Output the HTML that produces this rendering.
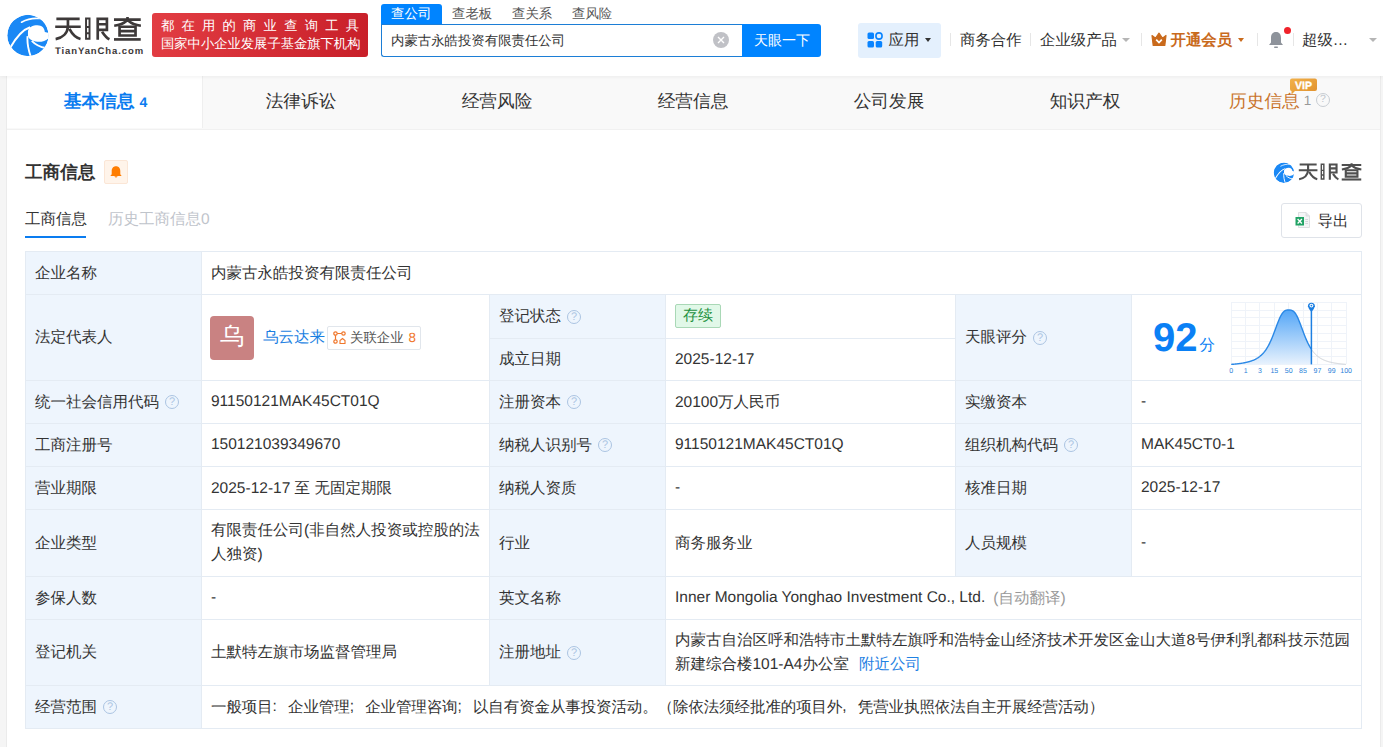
<!DOCTYPE html>
<html><head><meta charset="utf-8">
<style>
*{box-sizing:border-box;margin:0;padding:0}
html,body{width:1383px;height:747px;overflow:hidden}
body{position:relative;text-rendering:geometricPrecision;background:#f5f5f5;font-family:"Liberation Sans",sans-serif;color:#333;font-size:15px}
.a{position:absolute;white-space:nowrap}
#hdr{position:absolute;left:0;top:0;width:1383px;height:76px;background:#fff;z-index:3;box-shadow:0 1px 4px rgba(0,0,0,.06)}
#card{position:absolute;left:7px;top:76px;width:1373px;height:700px;background:#fff;box-shadow:-1px 0 0 #ebebeb,1px 0 0 #ebebeb}
#tabs{position:absolute;left:7px;top:76px;width:1373px;height:54px;background:#f9f9f9;border-bottom:1px solid #f1f1f1}
.tab{position:absolute;top:0;height:52px;width:196px;text-align:center;font-size:17.7px;line-height:50px;color:#333}
.cell{position:absolute;border-right:1px solid #e4ebf3;border-bottom:1px solid #e4ebf3;display:flex;align-items:center;padding-left:9px;font-size:15.5px;color:#333}
.lb{background:#eef5fd}
.q{display:inline-block;width:14px;height:14px;border:1px solid #abc4e2;border-radius:50%;font-size:11px;line-height:12px;text-align:center;color:#abc4e2;margin-left:6px}
</style></head>
<body>
<div id="hdr">
  <!-- logo -->
  <svg class="a" style="left:4px;top:10px" width="50" height="50" viewBox="0 0 747 747">
    <defs><clipPath id="cc"><circle cx="357" cy="380" r="308"/></clipPath></defs>
    <g clip-path="url(#cc)">
    <circle cx="357" cy="380" r="308" fill="#1a88f5"/>
    <path fill="#fff" d="M358,320 C365,255 430,228 500,228 C565,230 605,265 610,328 L700,350 L700,390 C640,455 580,478 500,474 C425,468 365,435 358,390 Z"/>
    <path stroke="#fff" stroke-width="30" fill="none" d="M95,560 C170,430 260,300 390,258"/>
    <path stroke="#fff" stroke-width="28" fill="none" d="M352,390 C342,500 365,600 405,710"/>
    <path stroke="#fff" stroke-width="28" fill="none" d="M415,462 C475,525 540,555 625,568"/>
    <path stroke="#fff" stroke-width="24" fill="none" stroke-linecap="round" d="M262,183 C340,140 440,118 530,128"/>
    </g>
  </svg>
  <svg class="a" style="left:50px;top:10px" width="100" height="36" viewBox="0 0 1383 498">
    <g fill="none" stroke="#3d3939" stroke-width="37">
      <path d="M88,122 H410 M72,232 H425"/>
      <path d="M248,122 V232 C240,320 175,385 78,402"/>
      <path d="M268,262 C310,340 355,385 422,402"/>
      <path stroke-width="27" d="M498.5,118.5 H546.5 V396.5 H498.5 Z M498.5,235 H546.5 M498.5,322 H546.5"/>
      <path d="M660,105 V410 M660,122 H787 V275 H660 M660,197 H787"/>
      <path d="M720,300 C760,360 790,390 822,405"/>
      <path d="M885,132 H1255 M1072,98 V132"/>
      <path d="M1065,145 C1010,195 950,210 888,218 M1080,145 C1135,195 1195,210 1257,218"/>
      <path d="M962,232 H1183 V353 H962 Z M962,292 H1183"/>
      <path d="M885,407 H1255"/>
    </g>
  </svg>
  <div class="a" style="left:55px;top:45.5px;font-size:9.5px;line-height:12px;font-weight:bold;color:#3d3939;letter-spacing:0.9px">TianYanCha.com</div>
  <!-- red banner -->
  <div class="a" style="left:152px;top:13px;width:216px;height:44px;border-radius:3px;background:linear-gradient(100deg,#e23d43,#c81f29)"></div>
  <div class="a" style="left:161px;top:15.5px;width:198px;font-size:13.3px;line-height:19px;color:#fff;text-align:justify;text-align-last:justify">都 在 用 的 商 业 查 询 工 具</div>
  <div class="a" style="left:161px;top:34px;width:200px;font-size:13.3px;line-height:19px;color:#fff">国家中小企业发展子基金旗下机构</div>
  <!-- search tabs -->
  <div class="a" style="left:381px;top:4px;width:61px;height:21px;background:#0084ff;border-radius:3px 3px 0 0"></div>
  <div class="a" style="left:391px;top:4px;font-size:13.5px;line-height:20px;color:#fff">查公司</div>
  <div class="a" style="left:452px;top:4px;font-size:13.4px;line-height:20px;color:#555">查老板</div>
  <div class="a" style="left:512px;top:4px;font-size:13.4px;line-height:20px;color:#555">查关系</div>
  <div class="a" style="left:572px;top:4px;font-size:13.4px;line-height:20px;color:#555">查风险</div>
  <div class="a" style="left:381px;top:24px;width:362px;height:33px;border:1px solid #1c7ed6;border-right:none;border-radius:0 0 0 3px;background:#fff"></div>
  <div class="a" style="left:391px;top:31px;font-size:13.4px;line-height:19px;color:#333">内蒙古永皓投资有限责任公司</div>
  <div class="a" style="left:713px;top:32px;width:16px;height:16px;border-radius:50%;background:#c0c1c6"></div>
  <svg class="a" style="left:713px;top:32px" width="16" height="16" viewBox="0 0 16 16"><path d="M5 5L11 11M11 5L5 11" stroke="#fff" stroke-width="1.4"/></svg>
  <div class="a" style="left:742px;top:24px;width:79px;height:33px;background:#0084ff;border-radius:0 3px 3px 0"></div>
  <div class="a" style="left:754px;top:30px;font-size:14px;line-height:20px;color:#fff">天眼一下</div>
  <!-- right nav -->
  <div class="a" style="left:858px;top:23px;width:83px;height:35px;background:#e4f0fd;border-radius:3px"></div>
  <svg class="a" style="left:867px;top:32px" width="16" height="16" viewBox="0 0 16 16">
    <rect x="0.5" y="0.5" width="6.5" height="6.5" rx="1.5" fill="#0a84ff"/>
    <circle cx="12" cy="4" r="3.1" fill="none" stroke="#0a84ff" stroke-width="1.6"/>
    <rect x="0.5" y="9" width="6.5" height="6.5" rx="1.5" fill="#0a84ff"/>
    <rect x="8.7" y="9" width="6.5" height="6.5" rx="1.5" fill="#0a84ff"/>
  </svg>
  <div class="a" style="left:888.5px;top:30.5px;font-size:15.4px;line-height:20px;color:#333">应用</div>
  <div class="a" style="left:925px;top:38px;width:0;height:0;border-left:3.5px solid transparent;border-right:3.5px solid transparent;border-top:4px solid #333"></div>
  <div class="a" style="left:950px;top:33px;width:1px;height:13px;background:#e6e6e6"></div>
  <div class="a" style="left:960px;top:30.5px;font-size:15.4px;line-height:20px;color:#333">商务合作</div>
  <div class="a" style="left:1030px;top:33px;width:1px;height:13px;background:#e6e6e6"></div>
  <div class="a" style="left:1040px;top:30.5px;font-size:15.4px;line-height:20px;color:#333">企业级产品</div>
  <div class="a" style="left:1122px;top:38px;width:0;height:0;border-left:4px solid transparent;border-right:4px solid transparent;border-top:4px solid #b5b5b5"></div>
  <div class="a" style="left:1141px;top:33px;width:1px;height:13px;background:#e6e6e6"></div>
  <svg class="a" style="left:1151px;top:32px" width="16" height="14" viewBox="0 0 16 14">
    <path d="M1 3.5 L4.6 6.2 L8 1.2 L11.4 6.2 L15 3.5 L13.8 13.5 L2.2 13.5 Z" fill="#c96a1c" stroke="#c96a1c" stroke-width="1.2" stroke-linejoin="round"/>
    <path d="M5.2 7.6 L8 10.6 L10.8 7.6" stroke="#fff" stroke-width="1.7" fill="none"/>
  </svg>
  <div class="a" style="left:1170.5px;top:30.5px;font-size:15.4px;line-height:20px;color:#c96a1c;font-weight:bold">开通会员</div>
  <div class="a" style="left:1238px;top:38px;width:0;height:0;border-left:3.5px solid transparent;border-right:3.5px solid transparent;border-top:4px solid #c96a1c"></div>
  <div class="a" style="left:1257px;top:33px;width:1px;height:13px;background:#e6e6e6"></div>
  <svg class="a" style="left:1268px;top:31px" width="16" height="18" viewBox="0 0 16 18">
    <path d="M8 1 C4.5 1 3 3.5 3 7 L3 11.5 L1 14 L15 14 L13 11.5 L13 7 C13 3.5 11.5 1 8 1Z" fill="#8e939b"/>
    <rect x="6" y="15.5" width="4" height="1.6" rx="0.8" fill="#8e939b"/>
  </svg>
  <div class="a" style="left:1284px;top:27px;width:7px;height:7px;border-radius:50%;background:#f0222a"></div>
  <div class="a" style="left:1293px;top:33px;width:1px;height:13px;background:#e6e6e6"></div>
  <div class="a" style="left:1302px;top:30.5px;font-size:15.4px;line-height:20px;color:#333">超级…</div>
  <div class="a" style="left:1369px;top:38px;width:0;height:0;border-left:4px solid transparent;border-right:4px solid transparent;border-top:4px solid #b5b5b5"></div>
</div>

<div id="card"></div>
<div id="tabs">
  <div class="tab" style="left:0;padding-left:2px;background:#fff;border-right:1px solid #efefef;color:#0a7cf0;font-weight:bold">基本信息 <span style="font-size:14px;font-weight:bold">4</span></div>
  <div class="tab" style="left:196px">法律诉讼</div>
  <div class="tab" style="left:392px">经营风险</div>
  <div class="tab" style="left:588px">经营信息</div>
  <div class="tab" style="left:784px">公司发展</div>
  <div class="tab" style="left:980px">知识产权</div>
  <div class="tab" style="left:1176px;color:#c9742c;text-align:left;padding-left:46px">历史信息<span style="font-size:13.5px;color:#999;margin-left:4px;position:relative;top:-2px">1</span></div>
  <div class="a" style="left:1309px;top:17px;width:14px;height:14px;border:1.3px solid #c8cdd3;border-radius:50%;font-size:10.5px;line-height:11.5px;text-align:center;color:#bfc5cc">?</div>
  <svg class="a" style="left:1282px;top:2px" width="29" height="18" viewBox="0 0 29 18">
    <defs><linearGradient id="vg" x1="0" y1="0" x2="1" y2="1"><stop offset="0" stop-color="#f2b14a"/><stop offset="1" stop-color="#e0902c"/></linearGradient></defs>
    <path d="M3,0.5 H26 Q28,0.5 28,2.5 V11 Q28,13 26,13 H6 L2.5,16.5 L2.5,13 Q1,13 1,11 V2.5 Q1,0.5 3,0.5Z" fill="url(#vg)"/>
    <text x="14.5" y="10.8" font-size="10.5" font-weight="bold" fill="#fff" stroke="#fff" stroke-width="0.35" text-anchor="middle" font-family="Liberation Sans, sans-serif">VIP</text>
  </svg>
</div>

<div id="content">
  <div class="a" style="left:25px;top:160px;font-size:17.6px;line-height:24px;font-weight:bold;color:#333">工商信息</div>
  <div class="a" style="left:104px;top:160px;width:24px;height:24px;background:#fff4ea;border:1px solid #fbe6d6;border-radius:2px"></div>
  <svg class="a" style="left:109px;top:165px" width="14" height="14" viewBox="0 0 14 14">
    <path d="M7 1.2 C4 1.2 2.7 3.5 2.7 6.2 L2.7 9.3 L1.3 10.9 L12.7 10.9 L11.3 9.3 L11.3 6.2 C11.3 3.5 10 1.2 7 1.2Z" fill="#ff7d00"/>
    <path d="M5.3 11.2 Q7 13.8 8.7 11.2Z" fill="#ff7d00"/>
  </svg>
  <!-- small logo -->
  <svg class="a" style="left:1272px;top:160px" width="25" height="25" viewBox="0 0 747 747">
    <g clip-path="url(#cc)">
    <circle cx="357" cy="380" r="308" fill="#1a88f5"/>
    <path fill="#fff" d="M358,320 C365,255 430,228 500,228 C565,230 605,265 610,328 L700,350 L700,390 C640,455 580,478 500,474 C425,468 365,435 358,390 Z"/>
    <path stroke="#fff" stroke-width="30" fill="none" d="M95,560 C170,430 260,300 390,258"/>
    <path stroke="#fff" stroke-width="28" fill="none" d="M352,390 C342,500 365,600 405,710"/>
    <path stroke="#fff" stroke-width="28" fill="none" d="M415,462 C475,525 540,555 625,568"/>
    <path stroke="#fff" stroke-width="24" fill="none" stroke-linecap="round" d="M262,183 C340,140 440,118 530,128"/>
    </g>
  </svg>
  <svg class="a" style="left:1295.2px;top:158px" width="73" height="26.3" viewBox="0 0 1383 498">
    <g fill="none" stroke="#4f4f4f" stroke-width="40">
      <path d="M88,122 H410 M72,232 H425"/>
      <path d="M248,122 V232 C240,320 175,385 78,402"/>
      <path d="M268,262 C310,340 355,385 422,402"/>
      <path stroke-width="27" d="M498.5,118.5 H546.5 V396.5 H498.5 Z M498.5,235 H546.5 M498.5,322 H546.5"/>
      <path d="M660,105 V410 M660,122 H787 V275 H660 M660,197 H787"/>
      <path d="M720,300 C760,360 790,390 822,405"/>
      <path d="M885,132 H1255 M1072,98 V132"/>
      <path d="M1065,145 C1010,195 950,210 888,218 M1080,145 C1135,195 1195,210 1257,218"/>
      <path d="M962,232 H1183 V353 H962 Z M962,292 H1183"/>
      <path d="M885,407 H1255"/>
    </g>
  </svg>
  <!-- sub tabs -->
  <div class="a" style="left:25px;top:210px;font-size:15.5px;line-height:20px;color:#333">工商信息</div>
  <div class="a" style="left:25px;top:236px;width:61px;height:2px;background:#0a7cf0"></div>
  <div class="a" style="left:108px;top:210px;font-size:15.5px;line-height:20px;color:#bfc4cb">历史工商信息0</div>
  <!-- export -->
  <div class="a" style="left:1281px;top:203px;width:81px;height:35px;border:1px solid #dfe3e9;border-radius:3px;background:#fff"></div>
  <svg class="a" style="left:1295px;top:212px" width="16" height="16" viewBox="0 0 16 16">
    <path d="M3.5 0.5 L11 0.5 L14.5 4 L14.5 15.5 L3.5 15.5 Z" fill="#f4f5f6" stroke="#d6d8db" stroke-width="0.8"/>
    <path d="M11 0.5 L11 4 L14.5 4" fill="#e4e6e9" stroke="#d6d8db" stroke-width="0.8"/>
    <rect x="0.5" y="5" width="8.5" height="8.5" fill="#21a365"/>
    <path d="M2.6 7 L6.9 11.5 M6.9 7 L2.6 11.5" stroke="#fff" stroke-width="1.3"/>
    <path d="M10.3 7.5 H13 M10.3 9.5 H13 M10.3 11.5 H13" stroke="#cfd3d7" stroke-width="0.9"/>
  </svg>
  <div class="a" style="left:1317.5px;top:211.5px;font-size:15.5px;line-height:20px;color:#333">导出</div>

  <!-- table -->
  <div class="a" style="left:25px;top:251px;width:1337px;height:478px;border-left:1px solid #e4ebf3;border-top:1px solid #e4ebf3"></div>
<div class="cell lb" style="left:26px;top:252px;width:176px;height:43px;">企业名称</div>
<div class="cell" style="left:202px;top:252px;width:1160px;height:43px;">内蒙古永皓投资有限责任公司</div>
<div class="cell lb" style="left:26px;top:295px;width:176px;height:86px;">法定代表人</div>
<div class="cell" style="left:202px;top:295px;width:288px;height:86px;"><div style="width:44px;height:44px;border-radius:4px;background:#c98282;color:#fff;font-size:24px;line-height:42px;text-align:center;margin-left:-1px">乌</div>
<span style="color:#1a7fe2;margin-left:9px">乌云达来</span>
<span style="display:inline-flex;align-items:center;height:24px;border:1px solid #e1e6ec;border-radius:2px;padding:0 4px 0 5px;margin-left:2px;font-size:13.4px;color:#555">
<svg width="13" height="13" viewBox="0 0 13 13" style="margin-right:4px"><circle cx="2.5" cy="2.5" r="1.7" fill="none" stroke="#f0772c" stroke-width="1.2"/><circle cx="10.5" cy="2.5" r="1.7" fill="none" stroke="#f0772c" stroke-width="1.2"/><circle cx="2.5" cy="10.5" r="1.7" fill="none" stroke="#f0772c" stroke-width="1.2"/><path d="M4.2 2.5H8.8M2.5 4.2V8.8" stroke="#f0772c" stroke-width="1.2"/><path d="M7 12.5V9.5L9.5 7.5L12 9.5V12.5Z" fill="none" stroke="#f0772c" stroke-width="1.1"/></svg>关联企业<span style="color:#f0772c;margin-left:5px">8</span></span></div>
<div class="cell lb" style="left:490px;top:295px;width:176px;height:44px;">登记状态<span class="q">?</span></div>
<div class="cell" style="left:666px;top:295px;width:290px;height:44px;"><span style="display:inline-block;height:24px;line-height:22px;padding:0 7px;border:1px solid #a9d8b6;background:#e1f8e8;color:#1e9140;border-radius:2px;font-size:15px;position:relative;top:-1px">存续</span></div>
<div class="cell lb" style="left:490px;top:339px;width:176px;height:42px;">成立日期</div>
<div class="cell" style="left:666px;top:339px;width:290px;height:42px;">2025-12-17</div>
<div class="cell lb" style="left:956px;top:295px;width:176px;height:86px;">天眼评分<span class="q">?</span></div>
<div class="cell" style="left:1132px;top:295px;width:230px;height:86px;"></div>
<svg class="a" style="left:1131px;top:294px" width="230" height="86" viewBox="1131 294 230 86">
<defs><linearGradient id="bg1" x1="0" y1="0" x2="0" y2="1"><stop offset="0" stop-color="#54a6f7"/><stop offset="1" stop-color="#e8f2fd"/></linearGradient></defs>
<g stroke="#eff3f9" stroke-width="1" shape-rendering="crispEdges"><line x1="1231.2" y1="302.4" x2="1231.2" y2="364.4"/><line x1="1245.6" y1="302.4" x2="1245.6" y2="364.4"/><line x1="1259.9" y1="302.4" x2="1259.9" y2="364.4"/><line x1="1274.3" y1="302.4" x2="1274.3" y2="364.4"/><line x1="1288.7" y1="302.4" x2="1288.7" y2="364.4"/><line x1="1303.0" y1="302.4" x2="1303.0" y2="364.4"/><line x1="1317.4" y1="302.4" x2="1317.4" y2="364.4"/><line x1="1331.7" y1="302.4" x2="1331.7" y2="364.4"/><line x1="1346.1" y1="302.4" x2="1346.1" y2="364.4"/><line x1="1231.2" y1="302.4" x2="1346.1" y2="302.4"/><line x1="1231.2" y1="310.1" x2="1346.1" y2="310.1"/><line x1="1231.2" y1="317.9" x2="1346.1" y2="317.9"/><line x1="1231.2" y1="325.6" x2="1346.1" y2="325.6"/><line x1="1231.2" y1="333.4" x2="1346.1" y2="333.4"/><line x1="1231.2" y1="341.1" x2="1346.1" y2="341.1"/><line x1="1231.2" y1="348.9" x2="1346.1" y2="348.9"/><line x1="1231.2" y1="356.6" x2="1346.1" y2="356.6"/><line x1="1231.2" y1="364.4" x2="1346.1" y2="364.4"/></g>
<path d="M1231.2,364.4 L1231.2,364.40 L1231.7,364.36 L1232.2,364.32 L1232.7,364.28 L1233.2,364.24 L1233.7,364.20 L1234.2,364.15 L1234.7,364.11 L1235.2,364.06 L1235.7,364.01 L1236.2,363.96 L1236.7,363.90 L1237.2,363.85 L1237.7,363.79 L1238.2,363.73 L1238.7,363.67 L1239.2,363.61 L1239.7,363.54 L1240.2,363.47 L1240.7,363.40 L1241.2,363.32 L1241.7,363.25 L1242.2,363.17 L1242.7,363.08 L1243.2,363.00 L1243.7,362.91 L1244.2,362.81 L1244.7,362.72 L1245.2,362.62 L1245.7,362.51 L1246.2,362.40 L1246.7,362.28 L1247.2,362.16 L1247.7,362.04 L1248.2,361.91 L1248.7,361.77 L1249.2,361.63 L1249.7,361.48 L1250.2,361.33 L1250.7,361.17 L1251.2,361.00 L1251.7,360.82 L1252.2,360.63 L1252.7,360.44 L1253.2,360.24 L1253.7,360.02 L1254.2,359.80 L1254.7,359.56 L1255.2,359.32 L1255.7,359.06 L1256.2,358.79 L1256.7,358.51 L1257.2,358.21 L1257.7,357.90 L1258.2,357.57 L1258.7,357.22 L1259.2,356.86 L1259.7,356.48 L1260.2,356.08 L1260.7,355.66 L1261.2,355.21 L1261.7,354.74 L1262.2,354.25 L1262.7,353.74 L1263.2,353.19 L1263.7,352.62 L1264.2,352.02 L1264.7,351.39 L1265.2,350.73 L1265.7,350.03 L1266.2,349.30 L1266.7,348.53 L1267.2,347.73 L1267.7,346.88 L1268.2,346.00 L1268.7,345.08 L1269.2,344.11 L1269.7,343.11 L1270.2,342.06 L1270.7,340.97 L1271.2,339.85 L1271.7,338.68 L1272.2,337.48 L1272.7,336.24 L1273.2,334.97 L1273.7,333.67 L1274.2,332.35 L1274.7,331.01 L1275.2,329.65 L1275.7,328.29 L1276.2,326.93 L1276.7,325.58 L1277.2,324.24 L1277.7,322.93 L1278.2,321.65 L1278.7,320.41 L1279.2,319.22 L1279.7,318.08 L1280.2,317.02 L1280.7,316.02 L1281.2,315.09 L1281.7,314.25 L1282.2,313.49 L1282.7,312.81 L1283.2,312.22 L1283.7,311.71 L1284.2,311.28 L1284.7,310.92 L1285.2,310.63 L1285.7,310.41 L1286.2,310.25 L1286.7,310.13 L1287.2,310.06 L1287.7,310.02 L1288.2,310.00 L1288.7,310.00 L1289.2,310.00 L1289.7,310.01 L1290.2,310.04 L1290.7,310.10 L1291.2,310.20 L1291.7,310.34 L1292.2,310.54 L1292.7,310.80 L1293.2,311.13 L1293.7,311.53 L1294.2,312.01 L1294.7,312.57 L1295.2,313.21 L1295.7,313.94 L1296.2,314.75 L1296.7,315.64 L1297.2,316.61 L1297.7,317.65 L1298.2,318.76 L1298.7,319.92 L1299.2,321.15 L1299.7,322.41 L1300.2,323.71 L1300.7,325.04 L1301.2,326.39 L1301.7,327.75 L1302.2,329.11 L1302.7,330.47 L1303.2,331.82 L1303.7,333.15 L1304.2,334.45 L1304.7,335.74 L1305.2,336.99 L1305.7,338.20 L1306.2,339.38 L1306.7,340.53 L1307.2,341.63 L1307.7,342.69 L1308.2,343.71 L1308.7,344.69 L1309.2,345.63 L1309.7,346.53 L1310.2,347.39 L1310.7,348.21 L1311.2,349.00 L1311.4,364.4 Z" fill="url(#bg1)"/>
<path d="M1231.2,364.40 L1231.7,364.36 L1232.2,364.32 L1232.7,364.28 L1233.2,364.24 L1233.7,364.20 L1234.2,364.15 L1234.7,364.11 L1235.2,364.06 L1235.7,364.01 L1236.2,363.96 L1236.7,363.90 L1237.2,363.85 L1237.7,363.79 L1238.2,363.73 L1238.7,363.67 L1239.2,363.61 L1239.7,363.54 L1240.2,363.47 L1240.7,363.40 L1241.2,363.32 L1241.7,363.25 L1242.2,363.17 L1242.7,363.08 L1243.2,363.00 L1243.7,362.91 L1244.2,362.81 L1244.7,362.72 L1245.2,362.62 L1245.7,362.51 L1246.2,362.40 L1246.7,362.28 L1247.2,362.16 L1247.7,362.04 L1248.2,361.91 L1248.7,361.77 L1249.2,361.63 L1249.7,361.48 L1250.2,361.33 L1250.7,361.17 L1251.2,361.00 L1251.7,360.82 L1252.2,360.63 L1252.7,360.44 L1253.2,360.24 L1253.7,360.02 L1254.2,359.80 L1254.7,359.56 L1255.2,359.32 L1255.7,359.06 L1256.2,358.79 L1256.7,358.51 L1257.2,358.21 L1257.7,357.90 L1258.2,357.57 L1258.7,357.22 L1259.2,356.86 L1259.7,356.48 L1260.2,356.08 L1260.7,355.66 L1261.2,355.21 L1261.7,354.74 L1262.2,354.25 L1262.7,353.74 L1263.2,353.19 L1263.7,352.62 L1264.2,352.02 L1264.7,351.39 L1265.2,350.73 L1265.7,350.03 L1266.2,349.30 L1266.7,348.53 L1267.2,347.73 L1267.7,346.88 L1268.2,346.00 L1268.7,345.08 L1269.2,344.11 L1269.7,343.11 L1270.2,342.06 L1270.7,340.97 L1271.2,339.85 L1271.7,338.68 L1272.2,337.48 L1272.7,336.24 L1273.2,334.97 L1273.7,333.67 L1274.2,332.35 L1274.7,331.01 L1275.2,329.65 L1275.7,328.29 L1276.2,326.93 L1276.7,325.58 L1277.2,324.24 L1277.7,322.93 L1278.2,321.65 L1278.7,320.41 L1279.2,319.22 L1279.7,318.08 L1280.2,317.02 L1280.7,316.02 L1281.2,315.09 L1281.7,314.25 L1282.2,313.49 L1282.7,312.81 L1283.2,312.22 L1283.7,311.71 L1284.2,311.28 L1284.7,310.92 L1285.2,310.63 L1285.7,310.41 L1286.2,310.25 L1286.7,310.13 L1287.2,310.06 L1287.7,310.02 L1288.2,310.00 L1288.7,310.00 L1289.2,310.00 L1289.7,310.01 L1290.2,310.04 L1290.7,310.10 L1291.2,310.20 L1291.7,310.34 L1292.2,310.54 L1292.7,310.80 L1293.2,311.13 L1293.7,311.53 L1294.2,312.01 L1294.7,312.57 L1295.2,313.21 L1295.7,313.94 L1296.2,314.75 L1296.7,315.64 L1297.2,316.61 L1297.7,317.65 L1298.2,318.76 L1298.7,319.92 L1299.2,321.15 L1299.7,322.41 L1300.2,323.71 L1300.7,325.04 L1301.2,326.39 L1301.7,327.75 L1302.2,329.11 L1302.7,330.47 L1303.2,331.82 L1303.7,333.15 L1304.2,334.45 L1304.7,335.74 L1305.2,336.99 L1305.7,338.20 L1306.2,339.38 L1306.7,340.53 L1307.2,341.63 L1307.7,342.69 L1308.2,343.71 L1308.7,344.69 L1309.2,345.63 L1309.7,346.53 L1310.2,347.39 L1310.7,348.21 L1311.2,349.00" fill="none" stroke="#2a88e6" stroke-width="1.4"/>
<path d="M1311.4,349.30 L1311.9,350.03 L1312.4,350.73 L1312.9,351.39 L1313.4,352.02 L1313.9,352.62 L1314.4,353.19 L1314.9,353.74 L1315.4,354.25 L1315.9,354.74 L1316.4,355.21 L1316.9,355.66 L1317.4,356.08 L1317.9,356.48 L1318.4,356.86 L1318.9,357.22 L1319.4,357.57 L1319.9,357.90 L1320.4,358.21 L1320.9,358.51 L1321.4,358.79 L1321.9,359.06 L1322.4,359.32 L1322.9,359.56 L1323.4,359.80 L1323.9,360.02 L1324.4,360.24 L1324.9,360.44 L1325.4,360.63 L1325.9,360.82 L1326.4,361.00 L1326.9,361.17 L1327.4,361.33 L1327.9,361.48 L1328.4,361.63 L1328.9,361.77 L1329.4,361.91 L1329.9,362.04 L1330.4,362.16 L1330.9,362.28 L1331.4,362.40 L1331.9,362.51 L1332.4,362.62 L1332.9,362.72 L1333.4,362.81 L1333.9,362.91 L1334.4,363.00 L1334.9,363.08 L1335.4,363.17 L1335.9,363.25 L1336.4,363.32 L1336.9,363.40 L1337.4,363.47 L1337.9,363.54 L1338.4,363.61 L1338.9,363.67 L1339.4,363.73 L1339.9,363.79 L1340.4,363.85 L1340.9,363.90 L1341.4,363.96 L1341.9,364.01 L1342.4,364.06 L1342.9,364.11 L1343.4,364.15 L1343.9,364.20 L1344.4,364.24 L1344.9,364.28 L1345.4,364.32 L1345.9,364.36" fill="none" stroke="#cdd1d6" stroke-width="1"/>
<line x1="1311.4" y1="309" x2="1311.4" y2="364.4" stroke="#1c7fe2" stroke-width="1.5"/>
<path d="M1307.9,306.2 A3.5,3.5 0 1 1 1314.9,306.2 Q1314.5,308.5 1311.4,312 Q1308.3,308.5 1307.9,306.2Z" fill="#1c7fe2"/>
<circle cx="1311.4" cy="305.6" r="1.9" fill="#fff"/><circle cx="1311.4" cy="305.6" r="0.9" fill="#1c7fe2"/>
<g fill="#2b82d9" font-size="7" text-anchor="middle" font-family="Liberation Sans, sans-serif"><text x="1231.2" y="373.3">0</text><text x="1245.6" y="373.3">1</text><text x="1259.9" y="373.3">3</text><text x="1274.3" y="373.3">15</text><text x="1288.7" y="373.3">50</text><text x="1303.0" y="373.3">85</text><text x="1317.4" y="373.3">97</text><text x="1331.7" y="373.3">99</text><text x="1346.1" y="373.3">100</text></g>
</svg>
<div class="a" style="left:1153px;top:312.5px;font-size:40px;line-height:50px;font-weight:bold;color:#0a80f5">92</div>
<div class="a" style="left:1199.5px;top:335.5px;font-size:15.5px;line-height:20px;color:#0a80f5">分</div>
<div class="cell lb" style="left:26px;top:381px;width:176px;height:43px;">统一社会信用代码<span class="q">?</span></div>
<div class="cell" style="left:202px;top:381px;width:288px;height:43px;">91150121MAK45CT01Q</div>
<div class="cell lb" style="left:490px;top:381px;width:176px;height:43px;">注册资本<span class="q">?</span></div>
<div class="cell" style="left:666px;top:381px;width:290px;height:43px;">20100万人民币</div>
<div class="cell lb" style="left:956px;top:381px;width:176px;height:43px;">实缴资本</div>
<div class="cell" style="left:1132px;top:381px;width:230px;height:43px;">-</div>
<div class="cell lb" style="left:26px;top:424px;width:176px;height:43px;">工商注册号</div>
<div class="cell" style="left:202px;top:424px;width:288px;height:43px;">150121039349670</div>
<div class="cell lb" style="left:490px;top:424px;width:176px;height:43px;">纳税人识别号<span class="q">?</span></div>
<div class="cell" style="left:666px;top:424px;width:290px;height:43px;">91150121MAK45CT01Q</div>
<div class="cell lb" style="left:956px;top:424px;width:176px;height:43px;">组织机构代码<span class="q">?</span></div>
<div class="cell" style="left:1132px;top:424px;width:230px;height:43px;">MAK45CT0-1</div>
<div class="cell lb" style="left:26px;top:467px;width:176px;height:43px;">营业期限</div>
<div class="cell" style="left:202px;top:467px;width:288px;height:43px;">2025-12-17 至 无固定期限</div>
<div class="cell lb" style="left:490px;top:467px;width:176px;height:43px;">纳税人资质</div>
<div class="cell" style="left:666px;top:467px;width:290px;height:43px;">-</div>
<div class="cell lb" style="left:956px;top:467px;width:176px;height:43px;">核准日期</div>
<div class="cell" style="left:1132px;top:467px;width:230px;height:43px;">2025-12-17</div>
<div class="cell lb" style="left:26px;top:510px;width:176px;height:67px;">企业类型</div>
<div class="cell" style="left:202px;top:510px;width:288px;height:67px;"><div style="line-height:24px;white-space:normal;width:272px">有限责任公司(非自然人投资或控股的法人独资)</div></div>
<div class="cell lb" style="left:490px;top:510px;width:176px;height:67px;">行业</div>
<div class="cell" style="left:666px;top:510px;width:290px;height:67px;">商务服务业</div>
<div class="cell lb" style="left:956px;top:510px;width:176px;height:67px;">人员规模</div>
<div class="cell" style="left:1132px;top:510px;width:230px;height:67px;">-</div>
<div class="cell lb" style="left:26px;top:577px;width:176px;height:43px;">参保人数</div>
<div class="cell" style="left:202px;top:577px;width:288px;height:43px;">-</div>
<div class="cell lb" style="left:490px;top:577px;width:176px;height:43px;">英文名称</div>
<div class="cell" style="left:666px;top:577px;width:696px;height:43px;">Inner Mongolia Yonghao Investment Co., Ltd.<span style="color:#999;margin-left:8px">(自动翻译)</span></div>
<div class="cell lb" style="left:26px;top:620px;width:176px;height:66px;">登记机关</div>
<div class="cell" style="left:202px;top:620px;width:288px;height:66px;">土默特左旗市场监督管理局</div>
<div class="cell lb" style="left:490px;top:620px;width:176px;height:66px;">注册地址<span class="q">?</span></div>
<div class="cell" style="left:666px;top:620px;width:696px;height:66px;"><div style="line-height:24px;white-space:normal;width:680px">内蒙古自治区呼和浩特市土默特左旗呼和浩特金山经济技术开发区金山大道8号伊利乳都科技示范园新建综合楼101-A4办公室<span style="color:#1f82e3;margin-left:10px">附近公司</span></div></div>
<div class="cell lb" style="left:26px;top:686px;width:176px;height:43px;">经营范围<span class="q">?</span></div>
<div class="cell" style="left:202px;top:686px;width:1160px;height:43px;letter-spacing:-0.11px">一般项目<span style="display:inline-block;width:1em">:</span>企业管理<span style="display:inline-block;width:1em">;</span>企业管理咨询<span style="display:inline-block;width:1em">;</span>以自有资金从事投资活动。（除依法须经批准的项目外<span style="display:inline-block;width:1em">,</span>凭营业执照依法自主开展经营活动）</div>
</div>
</body></html>
